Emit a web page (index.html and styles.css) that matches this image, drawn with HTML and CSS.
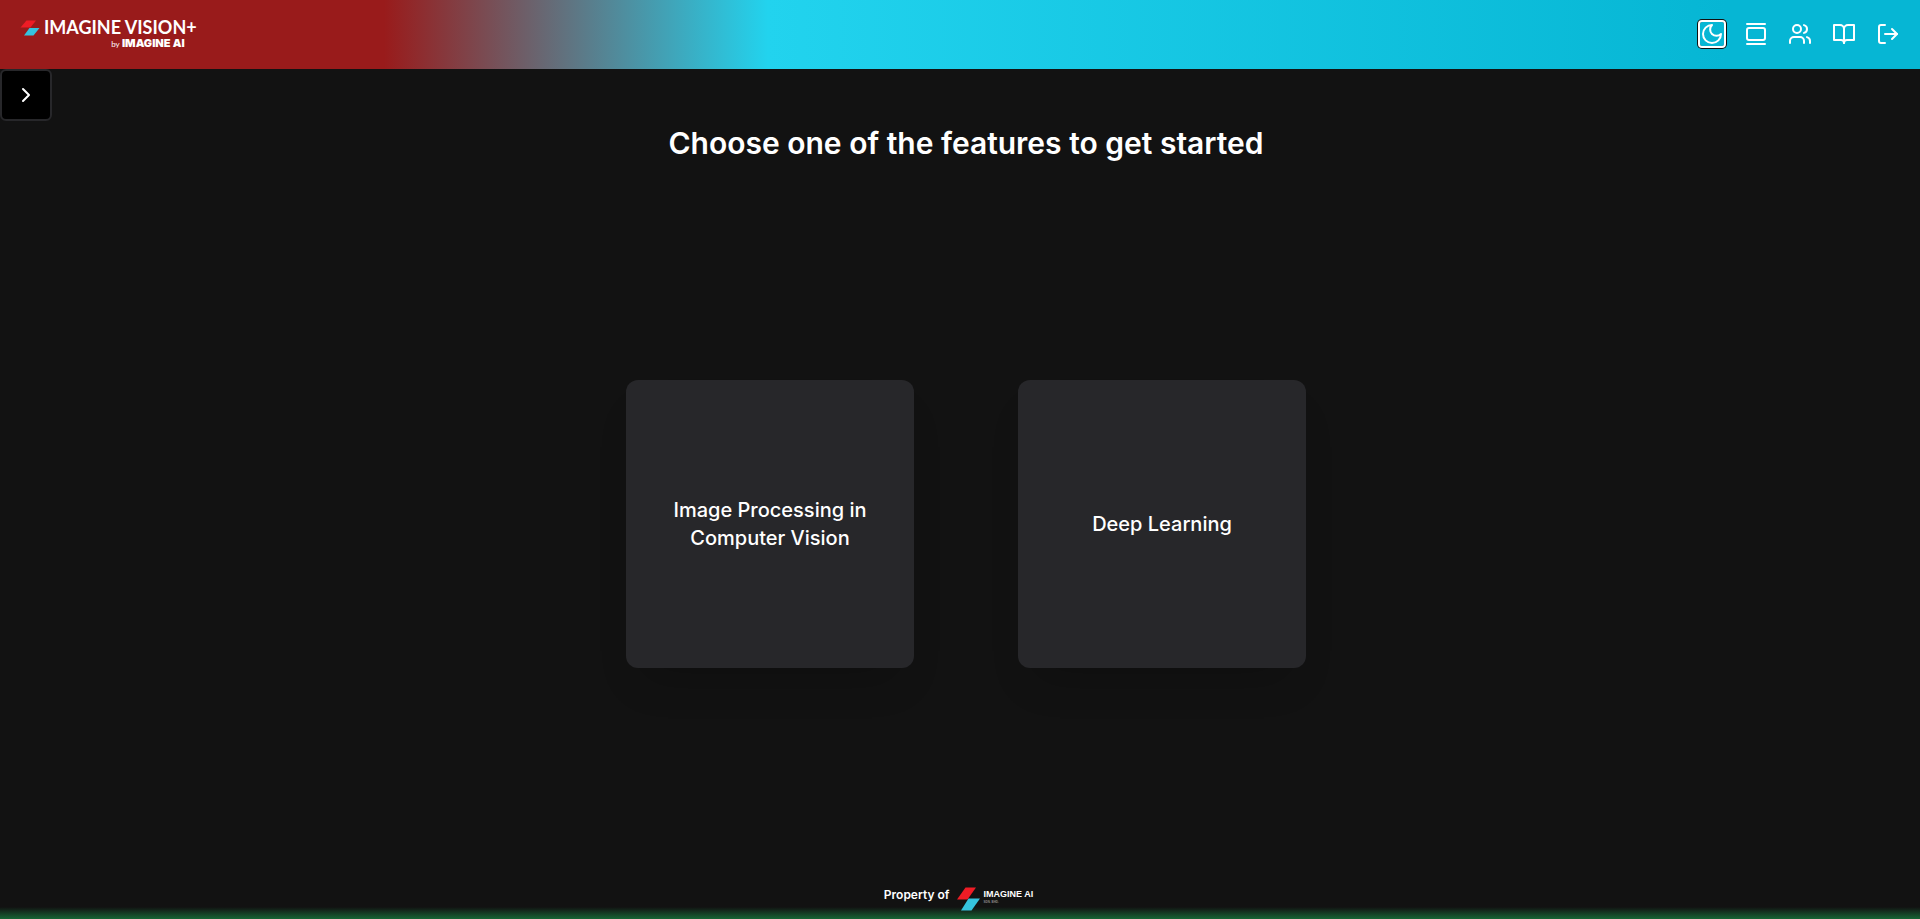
FILE: index.html
```html
<!DOCTYPE html>
<html lang="en">
<head>
<meta charset="utf-8">
<title>Imagine Vision+</title>
<link rel="stylesheet" href="styles.css">
</head>
<body>
<header class="topbar">
  <a class="brand" href="#">
    <svg class="brand-mark" viewBox="0 0 20 16" aria-hidden="true"><path d="M6.500 0.500H16L10.500 7.500H0.500Z" fill="#ee1c25"/><path d="M9.500 8H19.500L13.500 15.500H4Z" fill="#35c3de"/></svg>
    <span class="brand-text">
      <span class="brand-name">IMAGINE VISION+</span>
      <span class="brand-by"><small class="by">by</small> IMAGINE AI</span>
    </span>
  </a>
  <nav class="actions" aria-label="Main">
    <button class="action action-focus" type="button" aria-label="Toggle theme"><svg class="icon" viewBox="0 0 24 24"><path d="M12 3a6 6 0 0 0 9 9 9 9 0 1 1-9-9Z"/></svg></button>
    <button class="action" type="button" aria-label="Gallery"><svg class="icon" viewBox="0 0 24 24"><path d="M3 2h18"/><rect width="18" height="12" x="3" y="6" rx="2"/><path d="M3 22h18"/></svg></button>
    <button class="action" type="button" aria-label="Users"><svg class="icon" viewBox="0 0 24 24"><path d="M16 21v-2a4 4 0 0 0-4-4H6a4 4 0 0 0-4 4v2"/><circle cx="9" cy="7" r="4"/><path d="M22 21v-2a4 4 0 0 0-3-3.870"/><path d="M16 3.130a4 4 0 0 1 0 7.750"/></svg></button>
    <button class="action" type="button" aria-label="Documentation"><svg class="icon" viewBox="0 0 24 24"><path d="M2 3h6a4 4 0 0 1 4 4v14a3 3 0 0 0-3-3H2z"/><path d="M22 3h-6a4 4 0 0 0-4 4v14a3 3 0 0 1 3-3h7z"/></svg></button>
    <button class="action" type="button" aria-label="Log out"><svg class="icon" viewBox="0 0 24 24"><path d="M9 21H5a2 2 0 0 1-2-2V5a2 2 0 0 1 2-2h4"/><path d="m16 17 5-5-5-5"/><path d="M21 12H9"/></svg></button>
  </nav>
</header>
<div class="layout">
  <button class="drawer-toggle" type="button" aria-label="Open sidebar"><svg class="icon" viewBox="0 0 24 24"><path d="m9 18 6-6-6-6"/></svg></button>
  <main class="content">
    <h1 class="title">Choose one of the features to get started</h1>
    <div class="cards">
      <a class="card" href="#">Image Processing in Computer Vision</a>
      <a class="card" href="#">Deep Learning</a>
    </div>
  </main>
</div>
<footer class="footer">
  <span>Property of</span>
  <svg class="footer-mark" viewBox="0 0 24 24" aria-hidden="true"><path d="M9.500 0.500H20L11.500 12.500H1Z" fill="#ee1c25"/><path d="M12.500 11.500H24L15.500 23.500H5Z" fill="#35c3de"/></svg>
  <span class="footer-brand">IMAGINE AI<small class="footer-sub">SDN. BHD.</small></span>
</footer>
</body>
</html>
```

FILE: styles.css
```css
* { box-sizing: border-box; }

body {
  margin: 0;
  min-height: 100vh;
  display: flex;
  flex-direction: column;
  background: #121212;
  color: #fff;
  font-family: Inter, "Liberation Sans", sans-serif;
}

a { color: inherit; text-decoration: none; }
button { padding: 0; border: 0; background: none; color: inherit; cursor: pointer; }

.icon {
  display: block;
  width: 24px;
  height: 24px;
  fill: none;
  stroke: currentColor;
  stroke-width: 2;
  stroke-linecap: round;
  stroke-linejoin: round;
}

.topbar {
  display: flex;
  align-items: center;
  justify-content: space-between;
  height: 69px;
  padding: 0 20px 1px;
  background: linear-gradient(to right, #991b1b 20%, #22d3ee 40%, #06b6d4 90%);
}

.brand { display: flex; align-items: flex-start; gap: 4px; }
.brand-mark { width: 20px; height: 16px; margin-top: 2px; }
.brand-text { display: flex; flex-direction: column; }
.brand-name { font: 700 18px/18px Lato, sans-serif; }
.brand-by { align-self: flex-end; margin-right: 12px; font: 900 11px/14px Inter, sans-serif; }
.by { font: 400 8px/12px Lato, sans-serif; }

.actions { display: flex; gap: 20px; }
.action-focus { border-radius: 2px; outline: 2px solid #fff; box-shadow: 0 0 0 3px #101010; }

.layout { flex: 1; display: flex; align-items: flex-start; }

.drawer-toggle {
  display: grid;
  place-items: center;
  width: 52px;
  height: 52px;
  margin-right: -40px;
  border: 2px solid #27272a;
  border-radius: 6px;
  background: #000;
}

.content {
  flex: 1;
  align-self: stretch;
  display: flex;
  flex-direction: column;
  align-items: center;
  padding-top: 56px;
}

.title { margin: 0; font-size: 30px; line-height: 36px; font-weight: 600; }

.cards { flex: 1; display: flex; align-items: center; gap: 104px; }

.card {
  display: grid;
  place-items: center;
  width: 288px;
  height: 288px;
  padding: 32px;
  border-radius: 12px;
  background: #27272a;
  box-shadow: 0 25px 40px -16px rgba(0, 0, 0, .2);
  font-size: 20px;
  line-height: 28px;
  font-weight: 500;
  text-align: center;
}

.footer {
  display: flex;
  align-items: flex-start;
  justify-content: center;
  height: 32px;
  padding-right: 3px;
  background: linear-gradient(to top, #166534, transparent 12px);
  font-size: 12px;
  line-height: 16px;
  font-weight: 600;
}
.footer-mark { width: 24px; height: 24px; margin: 0 4px 0 6px; }
.footer-brand { font: 700 9px/14px "Liberation Sans", sans-serif; }
.footer-sub { display: block; color: #888; font-size: 3px; line-height: 3px; }
```
